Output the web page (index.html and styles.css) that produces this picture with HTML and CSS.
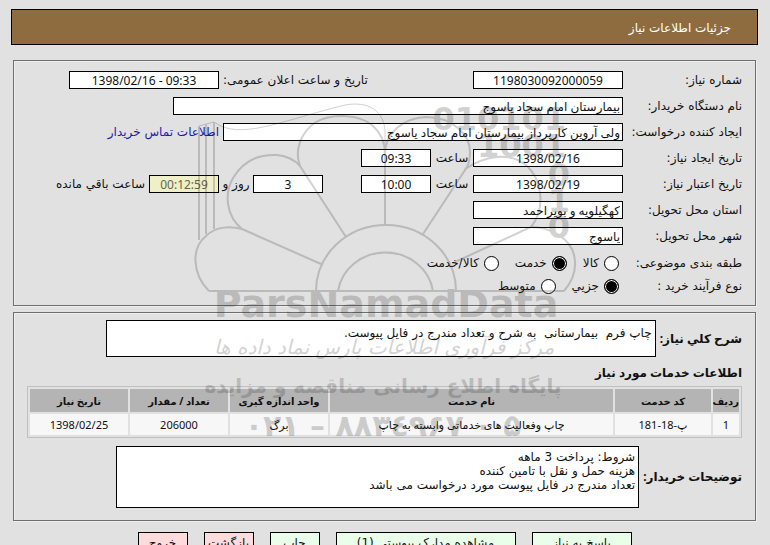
FILE: index.html
```html
<!DOCTYPE html>
<html lang="fa" dir="rtl">
<head>
    <meta charset="UTF-8">
    <meta name="viewport" content="width=device-width, initial-scale=1.0">
    <title>جزئیات اطلاعات نیاز</title>
    <link rel="stylesheet" href="styles.css">
</head>
<body>
    <h1 class="page-title">جزئیات اطلاعات نیاز</h1>

    <form class="need-form">
        <fieldset class="panel">
            <div class="row">
                <label class="row-label" for="needNo">شماره نیاز:</label>
                <input class="field field-md" id="needNo" type="text" value="1198030092000059" readonly>
                <label class="announce-label" for="announceDate">تاریخ و ساعت اعلان عمومی:</label>
                <input class="field field-md" id="announceDate" type="text" dir="ltr" value="1398/02/16 - 09:33" readonly>
            </div>
            <div class="row">
                <label class="row-label" for="buyerOrg">نام دستگاه خریدار:</label>
                <input class="field field-xl field-text" id="buyerOrg" type="text" value="بیمارستان امام سجاد یاسوج" readonly>
            </div>
            <div class="row">
                <label class="row-label" for="creator">ایجاد کننده درخواست:</label>
                <input class="field field-lg field-text" id="creator" type="text" value="ولی آروین کارپرداز بیمارستان امام سجاد یاسوج" readonly>
                <a class="contact-link" href="#">اطلاعات تماس خریدار</a>
            </div>
            <div class="row">
                <label class="row-label" for="createDate">تاریخ ایجاد نیاز:</label>
                <input class="field field-md" id="createDate" type="text" value="1398/02/16" readonly>
                <label class="hour-label" for="createHour">ساعت</label>
                <input class="field field-sm" id="createHour" type="text" value="09:33" readonly>
            </div>
            <div class="row">
                <label class="row-label" for="validDate">تاریخ اعتبار نیاز:</label>
                <input class="field field-md" id="validDate" type="text" value="1398/02/19" readonly>
                <label class="hour-label" for="validHour">ساعت</label>
                <input class="field field-sm" id="validHour" type="text" value="10:00" readonly>
                <input class="field field-sm days-left" id="daysLeft" type="text" value="3" readonly>
                <label class="day-label" for="daysLeft">روز و</label>
                <input class="field field-sm countdown" id="timeLeft" type="text" value="00:12:59" readonly>
                <label class="left-label" for="timeLeft">ساعت باقي مانده</label>
            </div>
            <div class="row">
                <label class="row-label" for="province">استان محل تحویل:</label>
                <input class="field field-md field-text" id="province" type="text" value="کهگیلویه و بویراحمد" readonly>
            </div>
            <div class="row">
                <label class="row-label" for="city">شهر محل تحویل:</label>
                <input class="field field-md field-text" id="city" type="text" value="یاسوج" readonly>
            </div>
            <div class="radios">
                <div class="row radio-row">
                    <span class="row-label">طبقه بندی موضوعی:</span>
                    <label class="option"><input type="radio" name="subject"> کالا</label>
                    <label class="option"><input type="radio" name="subject" checked> خدمت</label>
                    <label class="option"><input type="radio" name="subject"> کالا/خدمت</label>
                </div>
                <div class="row radio-row">
                    <span class="row-label">نوع فرآیند خرید :</span>
                    <label class="option"><input type="radio" name="process" checked> جزیي</label>
                    <label class="option"><input type="radio" name="process"> متوسط</label>
                </div>
            </div>
        </fieldset>

        <fieldset class="panel panel-details">
            <div class="area-row">
                <label class="area-label" for="summary">شرح کلي نیاز:</label>
                <textarea class="area area-summary" id="summary" readonly>چاپ فرم  بیمارستانی  به شرح و تعداد مندرج در فایل پیوست.</textarea>
            </div>
            <h2 class="section-title">اطلاعات خدمات مورد نیاز</h2>
            <table class="services">
                <thead>
                    <tr>
                        <th class="col-row">ردیف</th>
                        <th class="col-code">کد خدمت</th>
                        <th>نام خدمت</th>
                        <th class="col-std">واحد اندازه گیری</th>
                        <th class="col-std">تعداد / مقدار</th>
                        <th class="col-std">تاریخ نیاز</th>
                    </tr>
                </thead>
                <tbody>
                    <tr>
                        <td>1</td>
                        <td>پ-18-181</td>
                        <td>چاپ وفعالیت های خدماتی وابسته به چاپ</td>
                        <td>برگ</td>
                        <td>206000</td>
                        <td>1398/02/25</td>
                    </tr>
                </tbody>
            </table>
            <div class="area-row">
                <label class="area-label" for="notes">توضیحات خریدار:</label>
                <textarea class="area area-notes" id="notes" readonly>شروط: پرداخت 3 ماهه
هزینه حمل و نقل با تامین کننده
تعداد مندرج در فایل پیوست مورد درخواست می باشد</textarea>
            </div>
        </fieldset>

        <div class="actions">
            <button class="btn btn-wide" type="button">پاسخ به نیاز</button>
            <button class="btn btn-docs" type="button">مشاهده مدارک پیوستی (1)</button>
            <button class="btn" type="button">چاپ</button>
            <button class="btn btn-red" type="button">بازگشت</button>
            <button class="btn btn-red" type="button">خروج</button>
        </div>
    </form>

    <svg class="watermark" viewBox="0 0 390 360" width="390" height="360" aria-hidden="true">
        <g class="wm-lines">
            <path d="M9 201H364"/>
            <path d="M116 201A70 66 0 0 1 256 201"/>
            <path d="M138 201A48 45 0 0 1 233 201"/>
            <path d="M9 201C-8 184-9 158 6 146C16 136 31 136 42 139L121 174"/>
            <path d="M42 139C26 126 24 104 33 88C44 70 60 64 77 65C86 66 94 69 100 76L146 147"/>
            <path d="M100 76C94 60 101 42 116 32C132 23 160 24 173 36C182 44 185 53 185 64V135"/>
            <path d="M185 64C185 43 203 28 226 27C253 27 270 45 270 62C270 68 269 73 267 77L223 144"/>
            <path d="M265 79C285 66 310 61 327 76C342 90 346 118 331 137L255 172"/>
            <path d="M331 137C350 137 370 148 374 165C378 182 371 193 364 201"/>
            <path class="wm-thin" d="M14 32C40 51 80 31 145 15C168 11 183 20 185 40V64M-1 36L14 32"/>
            <path d="M-1 36V150M6 34V144M14 32V139"/>
        </g>
        <g class="wm-text" direction="ltr">
            <text class="wm-bits" x="366" y="40">010101</text>
            <text class="wm-bits" x="366" y="67">1001</text>
            <text class="wm-bits" x="370" y="96">0</text>
            <text class="wm-bits" x="370" y="122">1</text>
            <text class="wm-bits" x="370" y="148">0</text>
            <text class="wm-brand" x="186" y="227">ParsNamadData</text>
        </g>
        <g class="wm-text" direction="rtl">
            <text class="wm-script" x="184" y="264">مرکز فرآوری اطلاعات پارس نماد داده ها</text>
            <text class="wm-slogan" x="183" y="303">پایگاه اطلاع رسانی مناقصه و مزایده</text>
        </g>
        <g class="wm-text" direction="ltr">
            <text class="wm-phone" x="183" y="346">۰۲۱ – ۸۸۳٤۹۶۷ ۰ ۵</text>
        </g>
    </svg>
</body>
</html>
```

FILE: styles.css
```css
body {
    position: relative;
    margin: 9px 12px 0 11px;
    background-color: #e1e1e1;
    color: #111;
    font-family: "DejaVu Sans", sans-serif;
    font-size: 12px;
    line-height: 14px;
}

input, textarea, button {
    font: inherit;
    color: inherit;
}

.page-title {
    box-sizing: border-box;
    height: 36px;
    margin: 0 0 15px;
    padding: 11px 26px;
    border: 1px solid #000;
    background-color: #8f6c40;
    color: #fff;
    font-size: 12px;
    font-weight: normal;
}

.need-form {
    margin: 0 2px;
}

.panel {
    min-width: 0;
    margin: 0 0 6px;
    padding: 10px 13px 4px;
    border: 1px solid #6e6e6e;
    box-shadow: 1px 1px 0 #eee, inset 1px 1px 0 #eee;
}

.panel-details {
    padding-top: 7px;
    padding-bottom: 12px;
}

.row {
    display: flex;
    align-items: center;
    height: 18px;
    margin-bottom: 8px;
    white-space: nowrap;
}

.row-label {
    width: 119px;
    flex: none;
}

.field {
    box-sizing: border-box;
    height: 18px;
    padding: 0 2px;
    border: 1px solid #000;
    border-radius: 0;
    background-color: #fff;
    font-family: "Noto Sans", "DejaVu Sans", sans-serif;
    text-align: center;
}

.field-sm { width: 70px; }
.field-md { width: 150px; }
.field-lg { width: 400px; }
.field-xl { width: 450px; }

.field-text {
    text-align: right;
}

.announce-label {
    box-sizing: border-box;
    width: 254px;
    padding-left: 4px;
    text-align: left;
}

.contact-link {
    margin-right: 4px;
    color: #1a1ab0;
    text-decoration: none;
}

.hour-label {
    width: 42px;
    text-align: center;
}

.days-left {
    margin-right: 38px;
}

.day-label {
    width: 34px;
    text-align: center;
}

.countdown {
    background-color: #f0f0c8;
    color: #666650;
}

.left-label {
    margin-right: 4px;
}

.radios {
    padding-top: 2px;
}

.radio-row {
    height: 16px;
    margin-bottom: 7px;
}

.option {
    display: flex;
    align-items: center;
    gap: 5px;
    margin-left: 12px;
}

.option input {
    appearance: none;
    box-sizing: border-box;
    width: 15px;
    height: 15px;
    margin: 0 4px 0 0;
    border: 1px solid #000;
    border-radius: 50%;
    background-color: #fff;
}

.option input:checked {
    background-color: #000;
    box-shadow: inset 0 0 0 1px #fff;
}

.area-row {
    display: flex;
    align-items: center;
    gap: 4px;
}

.area-label {
    font-family: "Noto Sans", "DejaVu Sans", sans-serif;
    font-weight: bold;
    white-space: nowrap;
}

.area {
    box-sizing: border-box;
    margin: 0;
    padding: 3px;
    border: 1px solid #000;
    border-radius: 0;
    background-color: #fff;
    resize: none;
    overflow: hidden;
}

.area-summary {
    width: 550px;
    height: 37px;
    padding-top: 5px;
}

.area-notes {
    width: 523px;
    height: 62px;
}

.section-title {
    margin: 9px 0 6px;
    font-family: "Noto Sans", "DejaVu Sans", sans-serif;
    font-size: 12px;
    line-height: 14px;
}

.services {
    width: 100%;
    margin-bottom: 8px;
    border: 1px solid #c0c0c0;
    border-spacing: 2px;
    table-layout: fixed;
    font-family: "Noto Sans", "DejaVu Sans", sans-serif;
    font-size: 11px;
    text-align: center;
}

.services th {
    height: 23px;
    padding: 0;
    background-color: #b4b4b4;
    font-size: 10px;
}

.services td {
    height: 21px;
    padding: 0;
    background-color: #f7f7f7;
}

.col-row { width: 26px; }
.col-code { width: 96px; }
.col-std { width: 98px; }

.actions {
    display: flex;
    justify-content: center;
    gap: 16px;
    margin-top: 11px;
}

.btn {
    width: 50px;
    height: 22px;
    padding: 0;
    border: 1px solid #000;
    background-color: #eaffea;
    white-space: nowrap;
    cursor: pointer;
}

.btn-wide { width: 100px; }
.btn-docs { width: 180px; }

.btn-red {
    background-color: #ffdcdc;
}

/* logo printed over the form */
.watermark {
    position: absolute;
    top: 81px;
    left: 189px;
    overflow: visible;
    opacity: 0.2;
    pointer-events: none;
}

.wm-lines {
    fill: none;
    stroke: #222;
    stroke-width: 2;
}

.wm-thin {
    stroke-width: 1;
}

.wm-text {
    fill: #222;
    text-anchor: middle;
    font-family: "DejaVu Sans", sans-serif;
    font-weight: bold;
}

.wm-bits {
    font-size: 32px;
    text-anchor: end;
}

.wm-brand {
    font-size: 38px;
}

.wm-script {
    font-size: 20px;
    font-style: italic;
    font-weight: normal;
}

.wm-slogan {
    font-size: 20px;
}

.wm-phone {
    font-size: 30px;
}
```
